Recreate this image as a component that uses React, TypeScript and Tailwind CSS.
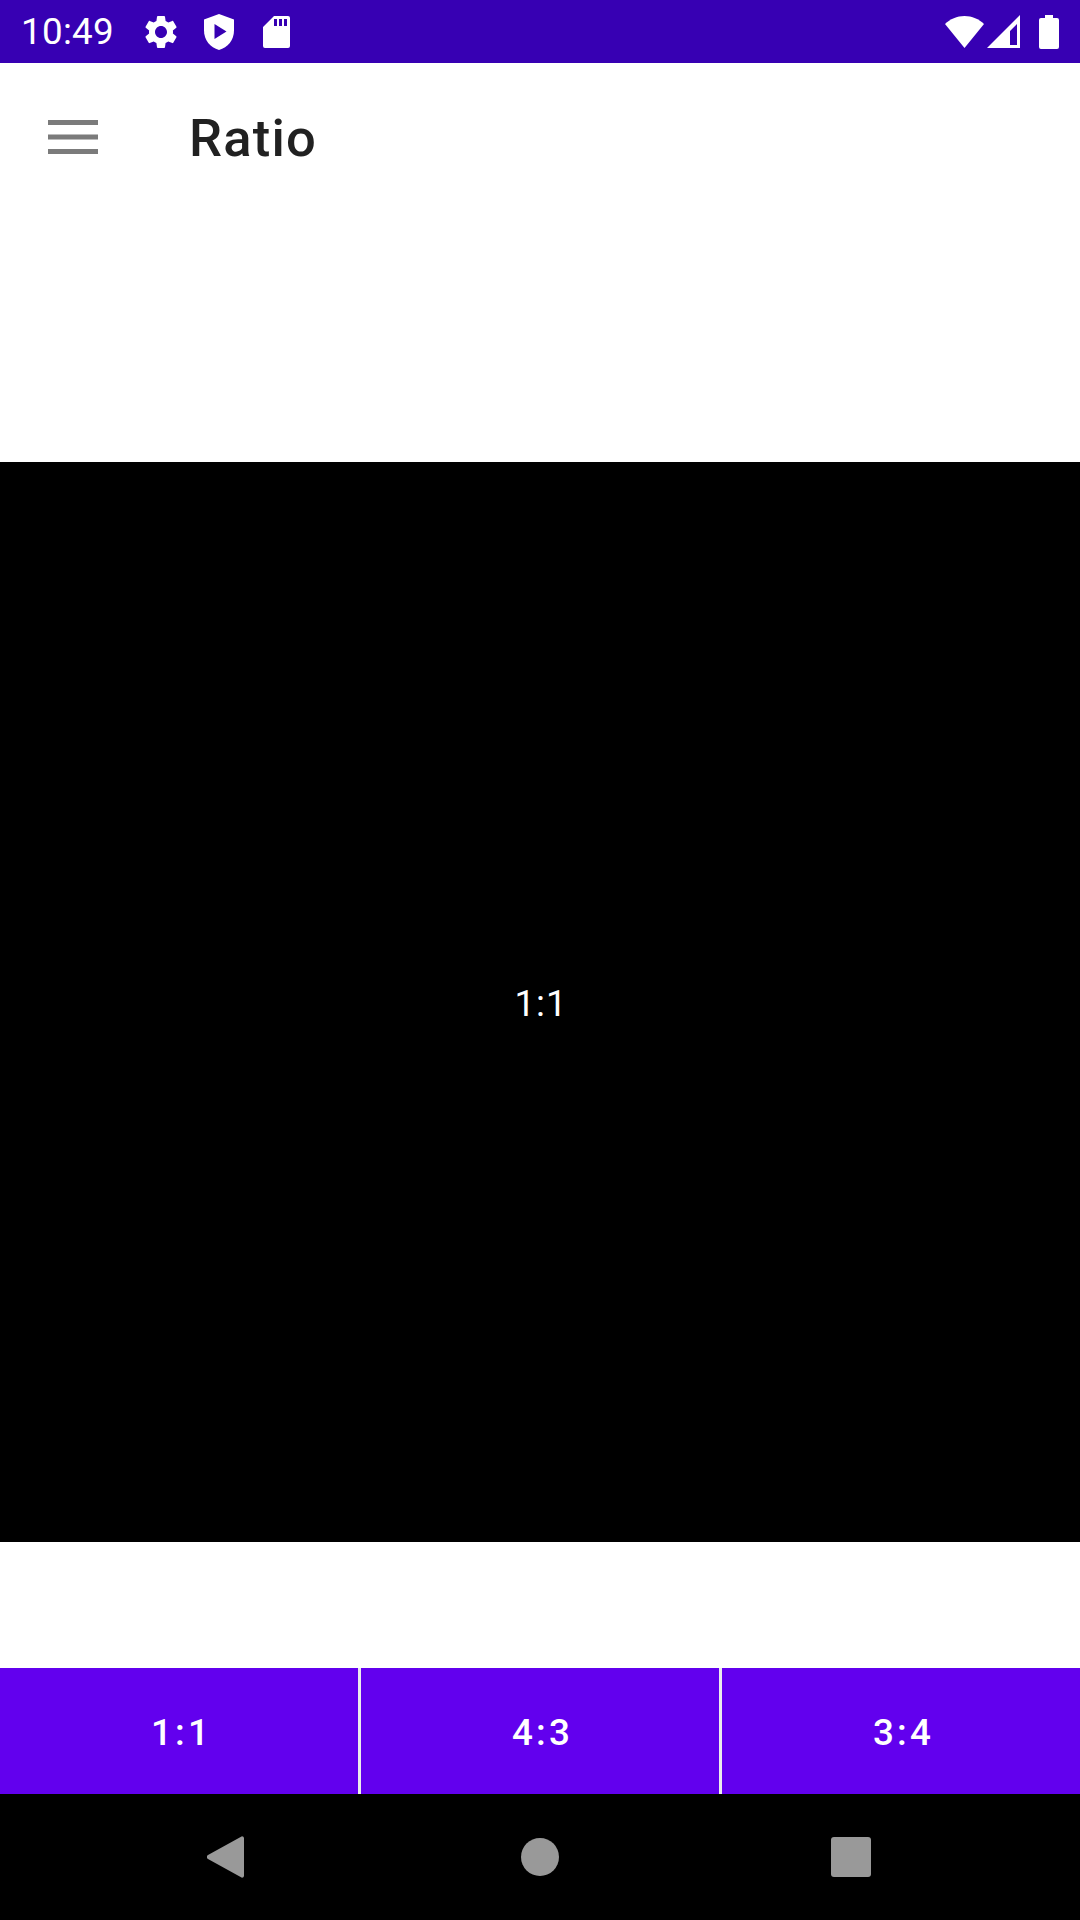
const font = { fontFamily: "Roboto, sans-serif" };

function StatusBar() {
  return (
    <div className="flex h-[63px] items-center bg-[#3700B3] pl-[21px] pr-[21px] text-white">
      <span className="mt-[2px] w-[102px] text-[36.75px] leading-none tracking-[0.3px]">10:49</span>
      <svg viewBox="0 0 24 24" className="ml-[18px] h-[40px] w-[40px]" fill="currentColor">
        <path d="M19.14 12.94c.04-.3.06-.61.06-.94 0-.32-.02-.64-.07-.94l2.03-1.58c.18-.14.23-.41.12-.61l-1.92-3.32c-.12-.22-.37-.29-.59-.22l-2.39.96c-.5-.38-1.03-.7-1.62-.94l-.36-2.54c-.04-.24-.24-.41-.48-.41h-3.84c-.24 0-.43.17-.47.41l-.36 2.54c-.59.24-1.13.57-1.62.94l-2.39-.96c-.22-.08-.47 0-.59.22L2.74 8.87c-.12.21-.08.47.12.61l2.03 1.58c-.05.3-.09.63-.09.94s.02.64.07.94l-2.03 1.58c-.18.14-.23.41-.12.61l1.92 3.32c.12.22.37.29.59.22l2.39-.96c.5.38 1.03.7 1.62.94l.36 2.54c.05.24.24.41.48.41h3.84c.24 0 .44-.17.47-.41l.36-2.54c.59-.24 1.13-.56 1.62-.94l2.39.96c.22.08.47 0 .59-.22l1.92-3.32c.12-.22.07-.47-.12-.61l-2.01-1.58zM12 15.6c-1.98 0-3.6-1.62-3.6-3.6s1.62-3.6 3.6-3.6 3.6 1.62 3.6 3.6-1.62 3.6-3.6 3.6z" />
      </svg>
      <svg viewBox="0 0 30 36" className="ml-[23px] h-[36px] w-[30px]">
        <path fill="currentColor" d="M15 0 0 5.500v11C0 26 6.200 33.500 15 36c8.800-2.500 15-10 15-19.500v-11z" />
        <path fill="#3700B3" d="M10.500 10 22.500 17.500 10.500 25z" />
      </svg>
      <svg viewBox="0 0 27 32" className="ml-[29px] h-[32px] w-[27px]" fill="currentColor">
        <path d="M25 0H11L0 11v19a2 2 0 0 0 2 2h23a2 2 0 0 0 2-2V2a2 2 0 0 0-2-2zM14 10h-3V3h3zm5 0h-3V3h3zm5 0h-3V3h3z" />
      </svg>
      <svg viewBox="0 0 39 32" className="ml-auto h-[32px] w-[39px]" fill="currentColor">
        <path d="M19.500 32 0 8C5 3 12 0 19.500 0S34 3 39 8z" />
      </svg>
      <svg viewBox="0 0 33 33" className="ml-[3px] h-[33px] w-[33px]" fill="currentColor">
        <path fillRule="evenodd" d="M33 0v33H0zM30 9l-7 7v14h7z" />
      </svg>
      <svg viewBox="0 0 20 34" className="ml-[19px] h-[34px] w-[20px]" fill="currentColor">
        <path d="M6 0h8v3h4a2 2 0 0 1 2 2v27a2 2 0 0 1-2 2H2a2 2 0 0 1-2-2V5a2 2 0 0 1 2-2h4z" />
      </svg>
    </div>
  );
}

function AppBar() {
  return (
    <header className="flex h-[147px] items-center bg-white pl-[48px]">
      <svg viewBox="0 0 50 34" className="h-[34px] w-[50px]" fill="#7b7b7b">
        <rect width="50" height="5" />
        <rect y="14.500" width="50" height="5" />
        <rect y="29" width="50" height="5" />
      </svg>
      <h1 className="ml-[91px] mt-[3px] text-[52.5px] font-medium leading-none tracking-[1.2px] text-[#212121]">Ratio</h1>
    </header>
  );
}

function RatioButton({ label }: { label: string }) {
  return (
    <button className="flex flex-1 items-center justify-center bg-[#6200EE] pl-[5px] pt-[3px] text-[36.75px] font-medium tracking-[3.2px] text-white">
      {label}
    </button>
  );
}

function NavBar() {
  return (
    <div className="flex h-[126px] items-center bg-black pl-[207px]">
      <svg viewBox="0 0 37 42" className="h-[42px] w-[37px]" fill="#999999">
        <path d="M35 0.300a2 2 0 0 1 2 1.700v38a2 2 0 0 1-2 1.700L1 23a2.300 2.300 0 0 1 0-4z" />
      </svg>
      <div className="ml-[277px] h-[38px] w-[38px] rounded-full bg-[#999999]" />
      <div className="ml-[272px] h-[40px] w-[40px] rounded-[3px] bg-[#999999]" />
    </div>
  );
}

export default function App() {
  return (
    <div className="flex h-[1920px] w-[1080px] flex-col bg-white" style={font}>
      <StatusBar />
      <AppBar />
      <main className="mb-[126px] mt-[252px] flex h-[1080px] items-center justify-center bg-black pl-[2px] pt-[3px]">
        <span className="text-[36.75px] tracking-[1px] text-white">1:1</span>
      </main>
      <div className="flex h-[126px] gap-[3px] bg-[#ECECEC]">
        <RatioButton label="1:1" />
        <RatioButton label="4:3" />
        <RatioButton label="3:4" />
      </div>
      <NavBar />
    </div>
  );
}
